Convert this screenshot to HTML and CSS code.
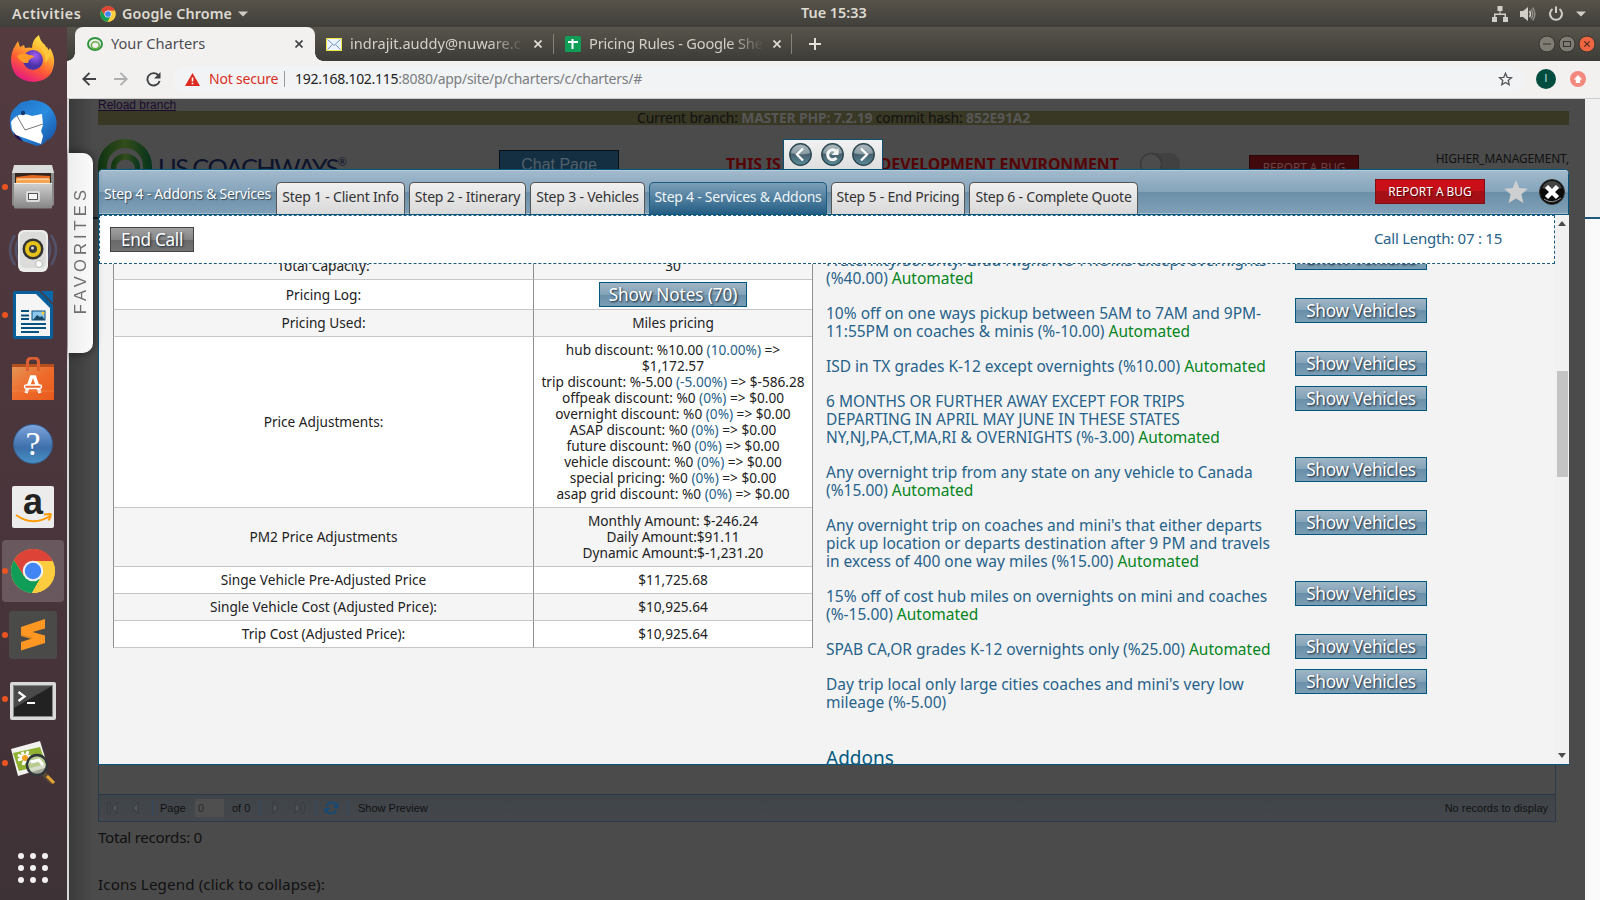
FILE: index.html
```html
<!DOCTYPE html>
<html lang="en">
<head>
<meta charset="utf-8">
<title>Your Charters</title>
<link rel="stylesheet" href="styles.css">
</head>
<body>
<div class="desktop">
  <header class="topbar">
    <span class="activities">Activities</span>
    <svg class="tb-chrome" width="16" height="16" viewBox="0 0 46 46"><use href="#chrome"/></svg>
    <span class="appname">Google Chrome</span>
    <svg width="10" height="6" viewBox="0 0 10 6"><path d="M0 .5h10L5 5.5z" fill="#cfccc5"/></svg>
    <span class="clock">Tue 15:33</span>
    <div class="tray">
      <svg width="16" height="16" viewBox="0 0 16 16" fill="#d2cfc8"><path d="M5.500 0h5v5h-2v2.500H14V11h2v5h-5v-5h1.500V9h-9v2H5v5H0v-5h2V7.500h5.500V5h-2z"/></svg>
      <svg width="16" height="16" viewBox="0 0 16 16"><path d="M0 5h3l5-4v14l-5-4H0z" fill="#d2cfc8"/><path d="M9.500 5q2 3 0 6" fill="none" stroke="#d2cfc8" stroke-width="1.500"/><path d="M11 3.200q3.500 4.800 0 9.600M12.700 1.500q4.300 6.500 0 13" fill="none" stroke="#908d84" stroke-width="1.500"/></svg>
      <svg width="16" height="16" viewBox="0 0 16 16" fill="none" stroke="#d2cfc8" stroke-width="2"><path d="M4.500 3a6 6 0 1 0 7 0M8 .5V7"/></svg>
      <svg width="10" height="6" viewBox="0 0 10 6"><path d="M0 .5h10L5 5.500z" fill="#d2cfc8"/></svg>
    </div>
  </header>

  <nav class="dock">
    <div class="app"><svg width="46" height="48" viewBox="0 0 46 48">
      <defs><linearGradient id="ff" x1=".8" y1="0" x2=".3" y2="1"><stop offset="0" stop-color="#fff44f"/><stop offset=".35" stop-color="#ffb02e"/><stop offset=".65" stop-color="#ff5a36"/><stop offset="1" stop-color="#e31587"/></linearGradient><radialGradient id="fp" cx=".6" cy=".3"><stop offset="0" stop-color="#a45cf0"/><stop offset="1" stop-color="#4a33a8"/></radialGradient></defs>
      <path d="M5 11l3-5 2 6 4-2 1 3q5-1 7 0Q22 5 29 0q1 6 6 10l3 6 2-3q5 8 4 16-2 17-21 18Q2 45 1 26 1 17 5 11z" fill="url(#ff)"/>
      <circle cx="23" cy="25" r="10" fill="url(#fp)"/><path d="M7 21q6-5 12-1 5 0 5 2-6 2-6 6-7 1-11-7z" fill="#ff9a28"/><path d="M31 15q6 5 4 13l6-8-4-8z" fill="#ffc83a"/></svg></div>
    <div class="app"><svg width="48" height="48" viewBox="0 0 48 48">
      <defs><linearGradient id="tb" x1="0" y1="0" x2="1" y2="1"><stop offset="0" stop-color="#1f6ec4"/><stop offset=".5" stop-color="#2a8de0"/><stop offset="1" stop-color="#154a9c"/></linearGradient></defs>
      <path d="M7 8Q12 1 21 2L19 1q22-1 28 18 3 14-8 23l1-4q-4 8-12 9L14 42Q0 36 1 22 1 12 7 8z" fill="url(#tb)"/><path d="M5 32l9 10-4-1q-6-4-5-9z" fill="#241152"/>
      <path d="M2 23q3-5 8-7 7-2 13 1l10-2 1 11-2 6 2 5-2 8L7 36 3 31z" fill="#fff"/><path d="M8 17l8 14 18-6" fill="none" stroke="#555" stroke-width=".8"/><circle cx="14" cy="14" r="2.200" fill="#16376c"/></svg></div>
    <div class="app running"><svg width="42" height="44" viewBox="0 0 42 44">
      <defs><linearGradient id="fi" x1="0" y1="0" x2="0" y2="1"><stop offset="0" stop-color="#d0d0d0"/><stop offset="1" stop-color="#858585"/></linearGradient></defs>
      <rect x="0" y="5" width="42" height="36" rx="2" fill="#8a8a8a"/><path d="M2 0h38l2 8H0z" fill="#dcdcdc"/><rect x="3" y="8" width="36" height="10" fill="#35261f"/><path d="M4 12l16-2 18 1v7H4z" fill="#e66a24"/><path d="M4 14h34v4H4z" fill="#f7a450"/><path d="M5 14h32" stroke="#fff3d6" stroke-width="1"/>
      <rect x="2" y="18" width="38" height="25.500" rx="1" fill="url(#fi)"/><path d="M2 18.500h38" stroke="#eee"/><rect x="14" y="26" width="14" height="11" rx="2" fill="#ddd"/><rect x="16.500" y="28.500" width="9" height="6" fill="#f4f4f4" stroke="#555"/></svg></div>
    <div class="app"><svg width="50" height="44" viewBox="0 0 50 44">
      <path d="M7 6Q-3 21 7 36M12 8Q4 21 12 34M43 6q10 15 0 30M38 8q8 13 0 26" fill="none" stroke="#56648a" stroke-width="2.500" opacity=".6"/>
      <rect x="10" y="1" width="30" height="42" rx="6" fill="#ececea"/><rect x="12" y="3" width="26" height="36" rx="5" fill="#dcdcda"/><circle cx="25" cy="20" r="10.500" fill="#333"/><circle cx="25" cy="20" r="8" fill="#e5c31a"/><circle cx="25" cy="20" r="4" fill="#3b3b3b"/><circle cx="24.500" cy="19" r="1.500" fill="#ddd"/><circle cx="31" cy="35" r="3.500" fill="#fafafa" stroke="#bbb"/></svg></div>
    <div class="app running"><svg width="42" height="50" viewBox="0 0 42 50">
      <path d="M3 1h24l14 14v32q0 2-2 2H3q-2 0-2-2V3q0-2 2-2z" fill="#07609b"/><path d="M4 4h20l14 14v28H4z" fill="#f5f5f5"/><path d="M29 1h12v12z" fill="#0a67a8"/>
      <path d="M9 21h8M9 25.500h8M9 29h8M9 34h25M9 38h25M9 42h18" stroke="#09517f" stroke-width="1.800"/><rect x="20" y="21" width="13" height="9" fill="#8dc7ec" stroke="#09517f"/><path d="M21 30l4-5 3 2 2-1 3 4z" fill="#1a4a66"/><circle cx="31" cy="23" r="1.500" fill="#fc3"/></svg></div>
    <div class="app"><svg width="42" height="44" viewBox="0 0 42 44">
      <defs><linearGradient id="sw" x1="0" y1="0" x2="1" y2="1"><stop offset="0" stop-color="#e59356"/><stop offset=".5" stop-color="#ee6b2c"/><stop offset="1" stop-color="#e75a1b"/></linearGradient></defs>
      <path d="M0 7h42v3H0z" fill="#b5501e"/><path d="M0 10h42v33H0z" fill="url(#sw)"/><path d="M15.500 14V5q0-4 5.500-4t5.500 4v9" fill="none" stroke="#dd6033" stroke-width="3"/><path d="M14 36l5.500-16h3L28 36" fill="none" stroke="#fff" stroke-width="3.500"/><rect x="12.500" y="28" width="17" height="3.500" rx="1.700" fill="#ee6b2c" stroke="#fff" stroke-width="1.500"/><path d="M0 34h42" stroke="#f58a53" opacity=".6"/></svg></div>
    <div class="app help"><span>?</span></div>
    <div class="app amazon"><span>a</span><svg width="38" height="12" viewBox="0 0 38 12"><path d="M1 2q17 12 34 1M29 1.500l6.500-.5q1 2-2 6.500" fill="none" stroke="#f90" stroke-width="2"/></svg></div>
    <div class="app running active"><svg width="46" height="46" viewBox="0 0 46 46"><g id="chrome"><circle cx="23" cy="23" r="22" fill="#fc3"/><path d="M23 23L4 12A22 22 0 0 1 42.500 13H23z" fill="#dd4437"/><path d="M4 12a22 22 0 0 0 18 33l9.500-17L14 28z" fill="#109d58"/><path d="M23 13h19.500A22 22 0 0 1 22 45l9.700-17z" fill="#fdcd3f"/><path d="M4 12l10 16 4-12 5-3h19.500Q37 1 23 1 11 1 4 12z" fill="#dd4437"/><circle cx="23" cy="23" r="10.300" fill="#f1f1f1"/><circle cx="23" cy="23" r="8.200" fill="#4285f4"/></g></svg></div>
    <div class="app running"><svg width="48" height="48" viewBox="0 0 48 48"><rect width="48" height="48" rx="3" fill="#4a4a49"/><path d="M12 20.500L36 27v5L12 25z" fill="#e8851a"/><path d="M36 8v9.500L23.500 21 36 24.500V32L12 39.500V31l12.500-4L12 23.500V16z" fill="#ff9722"/></svg></div>
    <div class="app running low"><svg width="46" height="38" viewBox="0 0 46 38"><rect width="46" height="38" rx="2" fill="#d9d9d9"/><rect x="3.500" y="3.500" width="39" height="31" fill="#222" stroke="#888"/><path d="M4 4h38L4 26z" fill="#4a4a4a"/><path d="M8.500 10l6 4.500-6 4.500M17 21h8" fill="none" stroke="#fff" stroke-width="2.200"/></svg></div>
    <div class="app running"><svg width="46" height="46" viewBox="0 0 46 46"><path d="M1 9L30 1l8 26L8 36z" fill="#f2f2ee"/><path d="M3 13l27-6 6 17L9 31z" fill="#8fb233"/><g stroke="#fff" stroke-width="3"><path d="M8 20l13-4M12 12l6 13M18 11l-5 14M8 15l14 7"/></g><circle cx="15" cy="18" r="3" fill="#f0a020"/><circle cx="27" cy="25" r="10" fill="#c9d5bb" fill-opacity=".7" stroke="#30363a" stroke-width="2.500"/><path d="M21 22l8-2 4 5" stroke="#fff" stroke-width="3" fill="none"/><path d="M34 34l9 9" stroke="#5c4b34" stroke-width="5"/><path d="M37 36l7 7" stroke="#e6a335" stroke-width="3"/></svg></div>
    <div class="app-grid"><i></i><i></i><i></i><i></i><i></i><i></i><i></i><i></i><i></i></div>
  </nav>

  <section class="browser">
    <div class="tabstrip">
      <div class="btab current">
        <svg class="swirl" width="16" height="14" viewBox="0 0 16 14"><ellipse cx="8" cy="7" rx="7" ry="6" fill="none" stroke="#2f9440" stroke-width="2"/><ellipse cx="8.300" cy="8.300" rx="4" ry="3.500" fill="none" stroke="#69ae45" stroke-width="1.600"/></svg>
        <span class="btitle">Your Charters</span>
        <svg class="bx" width="8" height="8" viewBox="0 0 8 8"><path d="M.5.5l7 7M7.500.5l-7 7" stroke="#444" stroke-width="1.700"/></svg>
      </div>
      <div class="btab second">
        <svg width="16" height="13" viewBox="0 0 16 13"><rect x=".5" y=".5" width="15" height="12" fill="#eaf3ff" stroke="#f0e848"/><path d="M1.500 1.500l6.500 6 6.500-6M1.500 11.500l5-5M14.500 11.500l-5-5" fill="none" stroke="#7795c0"/></svg>
        <span class="btitle fade">indrajit.auddy@nuware.c</span>
        <svg class="bx" width="8" height="8" viewBox="0 0 8 8"><path d="M.5.5l7 7M7.500.5l-7 7" stroke="#e0ddd5" stroke-width="1.700"/></svg>
      </div>
      <div class="btab third">
        <svg width="16" height="16" viewBox="0 0 16 16"><rect width="16" height="16" rx="1.500" fill="#0f9d58"/><path d="M3 6h10M7.500 3v10" stroke="#fff" stroke-width="2"/></svg>
        <span class="btitle fade">Pricing Rules - Google She</span>
        <svg class="bx" width="8" height="8" viewBox="0 0 8 8"><path d="M.5.5l7 7M7.500.5l-7 7" stroke="#e0ddd5" stroke-width="1.700"/></svg>
      </div>
      <svg class="plus" width="12" height="12" viewBox="0 0 12 12"><path d="M6 0v12M0 6h12" stroke="#e4e1da" stroke-width="2"/></svg>
      <div class="wincontrols">
        <svg width="18" height="18" viewBox="0 0 18 18"><circle cx="9" cy="9" r="8" fill="#7e7c73" stroke="#34332f"/><path d="M5 9h8" stroke="#33322e"/></svg>
        <svg width="18" height="18" viewBox="0 0 18 18"><circle cx="9" cy="9" r="8" fill="#7e7c73" stroke="#34332f"/><rect x="5.500" y="6.500" width="7" height="5" fill="none" stroke="#33322e"/></svg>
        <svg width="18" height="18" viewBox="0 0 18 18"><circle cx="9" cy="9" r="8" fill="#ee6641" stroke="#34332f"/><path d="M6.300 6.300l5.400 5.400M11.700 6.300l-5.400 5.400" stroke="#532b1d" stroke-width="1.200"/></svg>
      </div>
    </div>

    <div class="toolbar">
      <svg width="14" height="14" viewBox="0 0 14 14" fill="none" stroke="#3f4144" stroke-width="1.900"><path d="M14 7H1.500M7.500.8L1.300 7l6.200 6.200"/></svg>
      <svg width="14" height="14" viewBox="0 0 14 14" fill="none" stroke="#adaeb0" stroke-width="1.900"><path d="M0 7h12.500M6.500.8L12.700 7l-6.200 6.200"/></svg>
      <svg width="15" height="15" viewBox="0 0 15 15"><path d="M12.300 3.200A6.200 6.200 0 1 0 13.600 9" fill="none" stroke="#3f4144" stroke-width="1.900"/><path d="M14.500 0v6.500H8z" fill="#3f4144"/></svg>
      <div class="omnibox">
        <svg width="15" height="13" viewBox="0 0 15 13"><path d="M7.500 0L15 13H0z" fill="#dc2a22"/><path d="M7.500 4.500v4M7.500 9.700v1.600" stroke="#fff" stroke-width="1.600"/></svg>
        <span class="notsecure">Not secure</span><i class="osep"></i>
        <span class="url">192.168.102.115<em>:8080/app/site/p/charters/c/charters/#</em></span>
        <svg class="bookmark" width="15" height="14" viewBox="0 0 15 14"><path d="M7.500 1.300l1.700 4 4.300.4-3.300 2.800 1 4.200-3.700-2.200-3.700 2.200 1-4.200L1.500 5.700l4.300-.4z" fill="none" stroke="#505357" stroke-width="1.300"/></svg>
      </div>
      <span class="avatar">I</span>
      <svg class="update" width="16" height="16" viewBox="0 0 16 16"><circle cx="8" cy="8" r="8" fill="#f3887f"/><path d="M8 4l4.200 4.500h-2V12H5.800V8.500h-2z" fill="#fff"/></svg>
    </div>

    <div class="viewport">
      <div class="page">
        <a class="reload">Reload branch</a>
        <div class="branch">Current branch: <b>MASTER PHP: 7.2.19</b> commit hash: <b>852E91A2</b></div>
        <div class="masthead">
          <svg class="logo-mark" width="54" height="40" viewBox="0 0 54 40"><defs><linearGradient id="lg"><stop offset="0" stop-color="#0d3312"/><stop offset=".5" stop-color="#344d1b"/><stop offset="1" stop-color="#06331b"/></linearGradient></defs><path d="M0 28a27 27 0 0 1 54 0v12h-9V28a18 18 0 0 0-36 0v12H0z" fill="url(#lg)"/><path d="M13 33a14.500 13.500 0 0 1 29 0v7h-5v-5a9.500 9.500 0 0 0-19 0v5h-5z" fill="url(#lg)" transform="translate(0 -4)"/></svg>
          <span class="logo-text">US COACHWAYS<sup>®</sup></span>
          <span class="chat">Chat Page</span>
          <span class="devenv">THIS IS <i></i>DEVELOPMENT ENVIRONMENT</span>
          <span class="toggle"></span>
          <span class="bug-dim">REPORT A BUG</span>
          <span class="roles">HIGHER_MANAGEMENT,<br>PROJECT_MANAGEMENT,</span>
        </div>
        <div class="records">
          <div class="pager">
            <svg class="first" width="11" height="12" viewBox="0 0 11 12" fill="#505254" stroke="#32363a" stroke-width=".8"><path d="M1 .5h2v11H1zM10 .5v11L5 6z"/></svg>
            <svg class="prev" width="7" height="12" viewBox="0 0 7 12" fill="#505254" stroke="#32363a" stroke-width=".8"><path d="M6 .5v11L1 6z"/></svg>
            <i></i><span class="pg">Page</span><span class="pbox">0</span><span class="of">of 0</span><i></i>
            <svg class="next" width="7" height="12" viewBox="0 0 7 12" fill="#505254" stroke="#32363a" stroke-width=".8"><path d="M1 .5v11L6 6z"/></svg>
            <svg class="last" width="11" height="12" viewBox="0 0 11 12" fill="#505254" stroke="#32363a" stroke-width=".8"><path d="M8 .5h2v11H8zM1 .5v11L6 6z"/></svg>
            <i></i>
            <svg class="refresh" width="15" height="14" viewBox="0 0 15 14"><path d="M2.500 5.500Q4 1.500 8 1.500q3 0 4.500 2.500M12.500 8.500Q11 12.500 7 12.500q-3 0-4.500-2.500" fill="none" stroke="#174a75" stroke-width="2"/><path d="M14.500 1.500V7H9zM.5 12.500V7H6z" fill="#174a75"/></svg>
            <i></i><span class="preview">Show Preview</span><span class="none">No records to display</span>
          </div>
        </div>
        <div class="totals">Total records: 0</div>
        <div class="legend">Icons Legend (click to collapse):</div>
      </div>
      <div class="gutter"></div>

      <aside class="favorites"><span>FAVORITES</span></aside>

      <div class="navbox">
        <svg width="23" height="23" viewBox="0 0 23 23"><g id="ball"><circle cx="11.500" cy="11.500" r="10.800" fill="url(#bg)" stroke="#27424d" stroke-width="1.200"/><path d="M2 10Q4 2 11.500 2T21 10q-9 3-19 0z" fill="#fff" opacity=".35"/></g><defs><linearGradient id="bg" x1="0" y1="0" x2="0" y2="1"><stop offset="0" stop-color="#86999f"/><stop offset=".5" stop-color="#46616d"/><stop offset="1" stop-color="#5a8b98"/></linearGradient></defs><path d="M14 5.500l-6 6 6 6" fill="none" stroke="#fff" stroke-width="2.200"/></svg>
        <svg width="23" height="23" viewBox="0 0 23 23"><use href="#ball"/><path d="M15 8A5 5 0 1 0 15.500 15" fill="none" stroke="#f3f6f7" stroke-width="3"/><path d="M17.500 5v7h-7z" fill="#f3f6f7"/></svg>
        <svg width="23" height="23" viewBox="0 0 23 23"><use href="#ball"/><path d="M9 5.500l6 6-6 6" fill="none" stroke="#fff" stroke-width="2.200"/></svg>
      </div>

      <div class="dialog">
        <div class="dhead">
          <span class="dtitle">Step 4 - Addons &amp; Services</span>
          <div class="steps">
            <span class="step s1">Step 1 - Client Info</span>
            <span class="step s2">Step 2 - Itinerary</span>
            <span class="step s3">Step 3 - Vehicles</span>
            <span class="step s4">Step 4 - Services &amp; Addons</span>
            <span class="step s5">Step 5 - End Pricing</span>
            <span class="step s6">Step 6 - Complete Quote</span>
          </div>
          <span class="bug">REPORT A BUG</span>
          <svg class="fav" width="24" height="23" viewBox="0 0 24 23"><path d="M12 0l3.300 8 8.700.7-6.600 5.600 2 8.700-7.400-4.500L4.600 23l2-8.700L0 8.700 8.700 8z" fill="#cdcfd0"/></svg>
          <svg class="close" width="26" height="26" viewBox="0 0 26 26"><circle cx="13" cy="13" r="12.500" fill="#0b0b0b" stroke="#333"/><path d="M3 9Q6 2 13 2t10 7q-10 4-20 0z" fill="#777" opacity=".55"/><path d="M5 20q8 6 17-1" fill="none" stroke="#999" stroke-width="1"/><path d="M7.500 7.500l11 11M18.500 7.500l-11 11" stroke="#fff" stroke-width="4.400"/></svg>
        </div>
        <div class="dbody">
          <div class="content">
            <div class="callbar"><span class="btn end">End Call</span><span class="length">Call Length: 07 : 15</span></div>
            <div class="columns">
              <table class="pricing">
                <tr class="cut"><td>Total Capacity:</td><td>30</td></tr>
                <tr class="log"><td>Pricing Log:</td><td><span class="btn notes">Show Notes (70)</span></td></tr>
                <tr><td>Pricing Used:</td><td>Miles pricing</td></tr>
                <tr><td>Price Adjustments:</td><td>hub discount: %10.00 <a>(10.00%)</a> =&gt;<br>$1,172.57<br>trip discount: %-5.00 <a>(-5.00%)</a> =&gt; $-586.28<br>offpeak discount: %0 <a>(0%)</a> =&gt; $0.00<br>overnight discount: %0 <a>(0%)</a> =&gt; $0.00<br>ASAP discount: %0 <a>(0%)</a> =&gt; $0.00<br>future discount: %0 <a>(0%)</a> =&gt; $0.00<br>vehicle discount: %0 <a>(0%)</a> =&gt; $0.00<br>special pricing: %0 <a>(0%)</a> =&gt; $0.00<br>asap grid discount: %0 <a>(0%)</a> =&gt; $0.00</td></tr>
                <tr><td>PM2 Price Adjustments</td><td>Monthly Amount: $-246.24<br>Daily Amount:$91.11<br>Dynamic Amount:$-1,231.20</td></tr>
                <tr><td>Singe Vehicle Pre-Adjusted Price</td><td>$11,725.68</td></tr>
                <tr><td>Single Vehicle Cost (Adjusted Price):</td><td>$10,925.64</td></tr>
                <tr><td>Trip Cost (Adjusted Price):</td><td>$10,925.64</td></tr>
              </table>
              <div class="rules">
                <div class="rule"><p>Fraternity/Sorority/Grad Night/NO PROMS except overnights<br>(%40.00) <b>Automated</b></p><span class="btn">Show Vehicles</span></div>
                <div class="rule"><p>10% off on one ways pickup between 5AM to 7AM and 9PM-<br>11:55PM on coaches &amp; minis (%-10.00) <b>Automated</b></p><span class="btn">Show Vehicles</span></div>
                <div class="rule"><p>ISD in TX grades K-12 except overnights (%10.00) <b>Automated</b></p><span class="btn">Show Vehicles</span></div>
                <div class="rule"><p>6 MONTHS OR FURTHER AWAY EXCEPT FOR TRIPS<br>DEPARTING IN APRIL MAY JUNE IN THESE STATES<br>NY,NJ,PA,CT,MA,RI &amp; OVERNIGHTS (%-3.00) <b>Automated</b></p><span class="btn">Show Vehicles</span></div>
                <div class="rule"><p>Any overnight trip from any state on any vehicle to Canada<br>(%15.00) <b>Automated</b></p><span class="btn">Show Vehicles</span></div>
                <div class="rule"><p>Any overnight trip on coaches and mini's that either departs<br>pick up location or departs destination after 9 PM and travels<br>in excess of 400 one way miles (%15.00) <b>Automated</b></p><span class="btn">Show Vehicles</span></div>
                <div class="rule"><p>15% off of cost hub miles on overnights on mini and coaches<br>(%-15.00) <b>Automated</b></p><span class="btn">Show Vehicles</span></div>
                <div class="rule"><p>SPAB CA,OR grades K-12 overnights only (%25.00) <b>Automated</b></p><span class="btn">Show Vehicles</span></div>
                <div class="rule"><p>Day trip local only large cities coaches and mini's very low<br>mileage (%-5.00)</p><span class="btn">Show Vehicles</span></div>
                <h2>Addons</h2>
              </div>
            </div>
          </div>
          <div class="scrollbar">
            <svg width="8" height="5" viewBox="0 0 8 5"><path d="M0 5h8L4 0z" fill="#4b4b4b"/></svg>
            <i></i>
            <svg class="down" width="8" height="5" viewBox="0 0 8 5"><path d="M0 0h8L4 5z" fill="#4b4b4b"/></svg>
          </div>
        </div>
      </div>
    </div>
  </section>
</div>
</body>
</html>
```

FILE: styles.css
```css
* { box-sizing: border-box; }
body { margin: 0; font-family: "Noto Sans", "Open Sans", sans-serif; font-size: 15.2px; color: #222; white-space: nowrap; }
svg { display: block; flex: none; }
i { display: block; flex: none; }

.desktop { width: 1600px; height: 900px; overflow: hidden; display: grid; grid-template: 27px 873px / 67px 1533px; }

/* system bar */
.topbar { grid-column: 1 / 3; display: flex; align-items: center; position: relative; background: linear-gradient(#57534b, #403f3a); color: #dfdbd2; font-size: 14.3px; font-weight: 600; padding: 0 14px 0 12px; }
.activities { width: 88px; letter-spacing: .55px; }
.appname { margin: 0 4px 0 6px; width: 112px; letter-spacing: .15px; }
.clock { position: absolute; left: 801px; top: 3px; font-size: 14.4px; }
.tray { margin-left: auto; display: flex; align-items: center; gap: 12px; }

/* dock */
.dock { background: linear-gradient(#533b40, #47333a 70%, #3d3236); display: flex; flex-direction: column; align-items: flex-start; }
.app { width: 66px; height: 64px; display: flex; align-items: center; justify-content: center; position: relative; }
.running::before { content: ""; position: absolute; left: 2px; top: 29px; width: 6px; height: 6px; border-radius: 50%; background: #e95420; z-index: 1; }
.active::after { content: ""; position: absolute; left: 2px; top: 1px; width: 62px; height: 62px; border-radius: 4px; background: rgba(255,255,255,.18); }
.active svg { position: relative; z-index: 1; }
.low { padding-top: 4px; }
.help { padding-top: 2px; }
.help span { width: 40px; height: 40px; border-radius: 50%; background: linear-gradient(#7da3dc, #3d6faa 60%, #4690c4); border: 1px solid #35608f; color: #fff; font: 34px/38px "Liberation Serif", serif; text-align: center; }
.amazon span { width: 42px; height: 42px; border-radius: 2px; background: #ececec; color: #222; font: bold 36px/31px "Liberation Sans", sans-serif; text-align: center; }
.amazon svg { position: absolute; left: 15px; top: 38px; }
.app-grid { margin-top: auto; margin-bottom: 17px; margin-left: 18px; display: grid; grid-template-columns: repeat(3, 6px); gap: 6px; }
.app-grid i { width: 6px; height: 6px; border-radius: 50%; background: #f2f1f0; }

/* browser chrome */
.browser { display: flex; flex-direction: column; background: #f2f1f0; }
.tabstrip { height: 34px; background: linear-gradient(#57544b, #3d3c37); display: flex; align-items: center; position: relative; padding-left: 8px; font-size: 14.6px; color: #d3d0c8; }
.btab { display: flex; align-items: center; height: 34px; }
.btab svg { margin-right: 8px; }
.btab .bx { margin: 0; }
.btitle { overflow: hidden; width: 175px; letter-spacing: 0; padding-bottom: 2px; }
.fade { -webkit-mask-image: linear-gradient(90deg, #000 80%, transparent); mask-image: linear-gradient(90deg, #000 80%, transparent); }
.current { width: 240px; background: #f2f1f0; border-radius: 8px 8px 0 0; padding-left: 12px; color: #4c4d50; position: relative; }
.current::before, .current::after { content: ""; position: absolute; bottom: 0; width: 8px; height: 8px; }
.current::before { left: -8px; background: radial-gradient(circle at 0 0, transparent 7.5px, #f2f1f0 8px); }
.current::after { right: -8px; background: radial-gradient(circle at 100% 0, transparent 7.5px, #f2f1f0 8px); }
.current .btitle { width: 184px; }
.second { padding-left: 11px; }
.second .btitle, .third .btitle { width: 175px; margin-right: 9px; }
.second .bx { margin-right: 11px; }
.second::after, .third::after { content: ""; width: 1px; height: 20px; background: #86837a; }
.third { padding-left: 11px; }
.third .btitle { letter-spacing: -.2px; }
.third .bx { margin-right: 10px; }
.plus { margin-left: 17px; }
.wincontrols { margin-left: auto; display: flex; gap: 2px; padding-right: 4px; }

.toolbar { height: 38px; border-bottom: 1px solid #cfcecd; display: flex; align-items: center; padding: 0 14px 1px 15px; }
.toolbar > svg { margin-right: 18px; }
.toolbar > svg:nth-child(3) { margin-right: 13px; }
.omnibox { flex: 1; height: 27px; border-radius: 14px; background: #f1f3f5; display: flex; align-items: center; padding: 0 11px; font-size: 14px; }
.notsecure { color: #d93025; margin-left: 9px; width: 75px; letter-spacing: -.2px; }
.osep { width: 1px; height: 16px; background: #9a9c9f; margin-right: 10px; }
.url { color: #222; letter-spacing: -.27px; }
.notsecure, .url { padding-bottom: 1px; }
.url em { font-style: normal; color: #7b7d80; }
.bookmark { margin-left: auto; }
.avatar { width: 20px; height: 20px; border-radius: 50%; background: #004d40; color: #d5e5e2; font: 10px/20px "Liberation Sans", sans-serif; text-align: center; margin: 0 14px 0 12px; }
.toolbar > .update { margin: 0; }

/* dimmed page */
.viewport { flex: 1; position: relative; display: flex; overflow: hidden; }
.page { width: 1518px; background: linear-gradient(90deg, #d8d8d8 2px, #3a3a3a 2px, #4b4b4b 26px); padding: 0 16px 0 31px; display: flex; flex-direction: column; color: #111; }
.reload { font: 12px/12px "Liberation Sans", sans-serif; color: #1a0a2c; text-decoration: underline; height: 12px; }
.branch { height: 14px; background: #383825; text-align: center; line-height: 14px; font-size: 13.9px; letter-spacing: -.15px; }
.branch b { color: #575757; font-weight: 700; }
.masthead { height: 59px; display: flex; align-items: flex-start; padding-top: 13px; overflow: hidden; }
.logo-text { font: 25.5px/27px Lato, sans-serif; color: #0d132b; margin: 16px 0 0 6px; width: 190px; letter-spacing: -1.6px; }
.logo-text sup { font-size: 11px; vertical-align: 11px; line-height: 0; }
.chat { width: 120px; height: 32px; margin: 12px 0 0 151px; background: #142f42; border: 1px solid #050f17; color: #51606a; font: 16px/27px "Liberation Sans", sans-serif; text-align: center; }
.devenv { color: #550306; font-weight: 700; font-size: 15.8px; line-height: 20px; margin: 16px 0 0 107px; display: flex; width: 393px; letter-spacing: -.03px; }
.devenv i { width: 99px; }
.toggle { width: 40px; height: 22px; border-radius: 11px; background: #414141; margin: 15px 0 0 21px; position: relative; }
.toggle::after { content: ""; position: absolute; left: 1px; top: 1px; width: 20px; height: 20px; border-radius: 50%; background: #4c4c4c; box-shadow: 0 0 2px #222; }
.bug-dim { width: 110px; height: 25px; margin: 17px 0 0 69px; background: #400a0d; border: 1px solid #2b0406; color: #6b4446; font-size: 11.8px; line-height: 23px; text-align: center; }
.roles { margin: 12px 0 0 auto; font-size: 11.9px; line-height: 16px; letter-spacing: -.1px; text-align: right; }
.records { height: 638px; border: 1px solid #2b3948; border-top: 0; width: 1458px; display: flex; align-items: flex-end; }
.records::before { content: ""; position: absolute; left: 26px; top: 118px; width: 6px; height: 2px; background: #101d28; }
.pager { width: 100%; height: 27px; border-top: 1px solid #2b3948; background: linear-gradient(#3f4449, #44484c); display: flex; align-items: center; font: 11px "Liberation Sans", sans-serif; padding: 0 7px 0 8px; }
.pager i { width: 1px; height: 14px; background: #2f4a63; }
.prev { margin: 0 13px 0 14px; }
.pg { margin-left: 7px; width: 35px; }
.pbox { width: 29px; height: 18px; background: #4f4f4f; color: #2a2a2a; line-height: 18px; padding-left: 3px; }
.of { margin-left: 8px; width: 28px; }
.next { margin: 0 15px 0 11px; }
.last { margin-right: 10px; }
.refresh { margin: 0 8px 0 8px; }
.preview { margin-left: 10px; }
.none { margin-left: auto; }
.totals { margin-top: 4px; height: 22px; line-height: 22px; letter-spacing: -.3px; }
.legend { margin-top: 25px; line-height: 22px; letter-spacing: .1px; }
.gutter { width: 15px; background: linear-gradient(#f1f1f1 118px, #1d5a80 118px, #1d5a80 120px, #fafafa 120px); }

/* favourites tab */
.favorites { position: absolute; left: 1px; top: 54px; width: 25px; height: 200px; padding-bottom: 6px; border-radius: 0 10px 10px 0; background: linear-gradient(90deg, #eee, #fafafa); box-shadow: 0 0 10px rgba(0,0,0,.6); z-index: 3; display: flex; align-items: center; justify-content: center; }
.favorites span { writing-mode: vertical-rl; transform: rotate(180deg); font: 16.5px "Liberation Sans", sans-serif; letter-spacing: 4.1px; color: #6e6e6e; }

/* dialog */
.navbox { position: absolute; left: 716px; top: 40px; width: 100px; height: 31px; background: linear-gradient(#f2f2f2, #dedede); border: 1px solid #0b4f72; display: flex; align-items: center; padding: 0 5px; gap: 8.6px; }
.dialog { position: absolute; left: 31px; top: 70px; width: 1471px; height: 596px; border: 1px solid #04577c; border-right-width: 0; border-radius: 5px 5px 0 0; background: #f3f3f3; overflow: hidden; display: flex; flex-direction: column; }
.dhead { height: 45px; border-bottom: 1px solid #0b5880; border-right: 1px solid #04577c; background: linear-gradient(#a3bacd, #84a3ba 50%, #6b8fa8 50%, #80a1b8); box-shadow: inset 0 1px #b9cbd8, inset 0 -1px #a5bccb; display: flex; }
.dtitle { width: 177px; padding-left: 5px; line-height: 48px; font-size: 14px; letter-spacing: -.26px; color: #fff; text-shadow: 1px 1px 1px #345; }
.steps { display: flex; gap: 4px; align-items: flex-end; }
.step { height: 32px; border: 1px solid #555; border-bottom: 0; border-radius: 5px 5px 0 0; background: linear-gradient(#f0f0f0, #d9d9d9); color: #333; font-size: 14px; line-height: 28px; text-align: center; letter-spacing: -.2px; }
.s1 { width: 129px; } .s2 { width: 117px; } .s3 { width: 115px; } .s4 { width: 178px; } .s5 { width: 134px; } .s6 { width: 169px; }
.s4 { background: linear-gradient(#7b9fb8, #245e84); border-color: #1d5a80; color: #eef4f8; letter-spacing: -.25px; }
.bug { width: 110px; height: 25px; margin: 9px 19px 0 auto; border: 1px solid #7c1015; background: linear-gradient(#cf0d17, #c4121b 50%, #a60f16 50%, #a31017); color: #fff; font-size: 11.9px; line-height: 23px; text-align: center; text-shadow: 1px 1px 1px #500; }
.fav { margin: 10px 11px 0 0; }
.close { margin: 9px 3px 0 0; }
.dbody { flex: 1; min-height: 0; display: flex; }
.content { width: 1456px; overflow: hidden; }
.callbar { height: 49px; background: #fff; border: 1px dashed #1d5a80; position: relative; z-index: 2; display: flex; justify-content: space-between; align-items: flex-start; padding: 11px 52px 0 10px; }
.length { color: #26628a; line-height: 23px; letter-spacing: -.25px; font-size: 15px; }
.btn { display: block; width: 132px; height: 25px; border: 1px solid #04577c; background: linear-gradient(#9fb5c5, #84a3b8 50%, #6a8fa9 50%, #7b9db4); color: #fff; font-size: 17.2px; line-height: 23px; text-align: center; text-shadow: 1px 1px 2px #123; letter-spacing: -.3px; }
.end { width: 84px; border-color: #444; background: linear-gradient(#a2a2a2, #858585 50%, #686868 50%, #747474); }
.columns { display: flex; margin-top: -19px; align-items: flex-start; }
.pricing { margin: 8px 0 0 14px; width: 700px; table-layout: fixed; border-collapse: separate; border-spacing: 0; border-right: 1px solid #8e8e8e; font-size: 13.65px; line-height: 16px; }
.pricing td { border-left: 1px solid #8e8e8e; border-bottom: 1px solid #c6c6c6; padding: 5px 0; text-align: center; background: #fff; }
.pricing td:first-child { width: 420px; }
.pricing tr:nth-child(odd) td { background: #f5f5f5; }
.pricing .log td { padding: 2px 0; height: 30px; }
.pricing a, .rule p { color: #26628a; }
.notes { width: 148px; margin: 0 auto; letter-spacing: -.1px; }
.rules { margin-left: 13px; }
.rule { display: flex; align-items: flex-start; }
.rule p { margin: 6px 0 11px; width: 469px; line-height: 18px; font-size: 15.5px; }
.rule b { color: #058420; font-weight: 400; }
h2 { margin: 21px 0 0; font-size: 19px; line-height: 30px; font-weight: 400; color: #045a80; }
.scrollbar { width: 14px; background: #f1f1f1; display: flex; flex-direction: column; align-items: center; padding: 6px 0; }
.scrollbar i { width: 11px; height: 106px; margin-top: 145px; background: #c4c4c4; }
.down { margin-top: auto; }
```
